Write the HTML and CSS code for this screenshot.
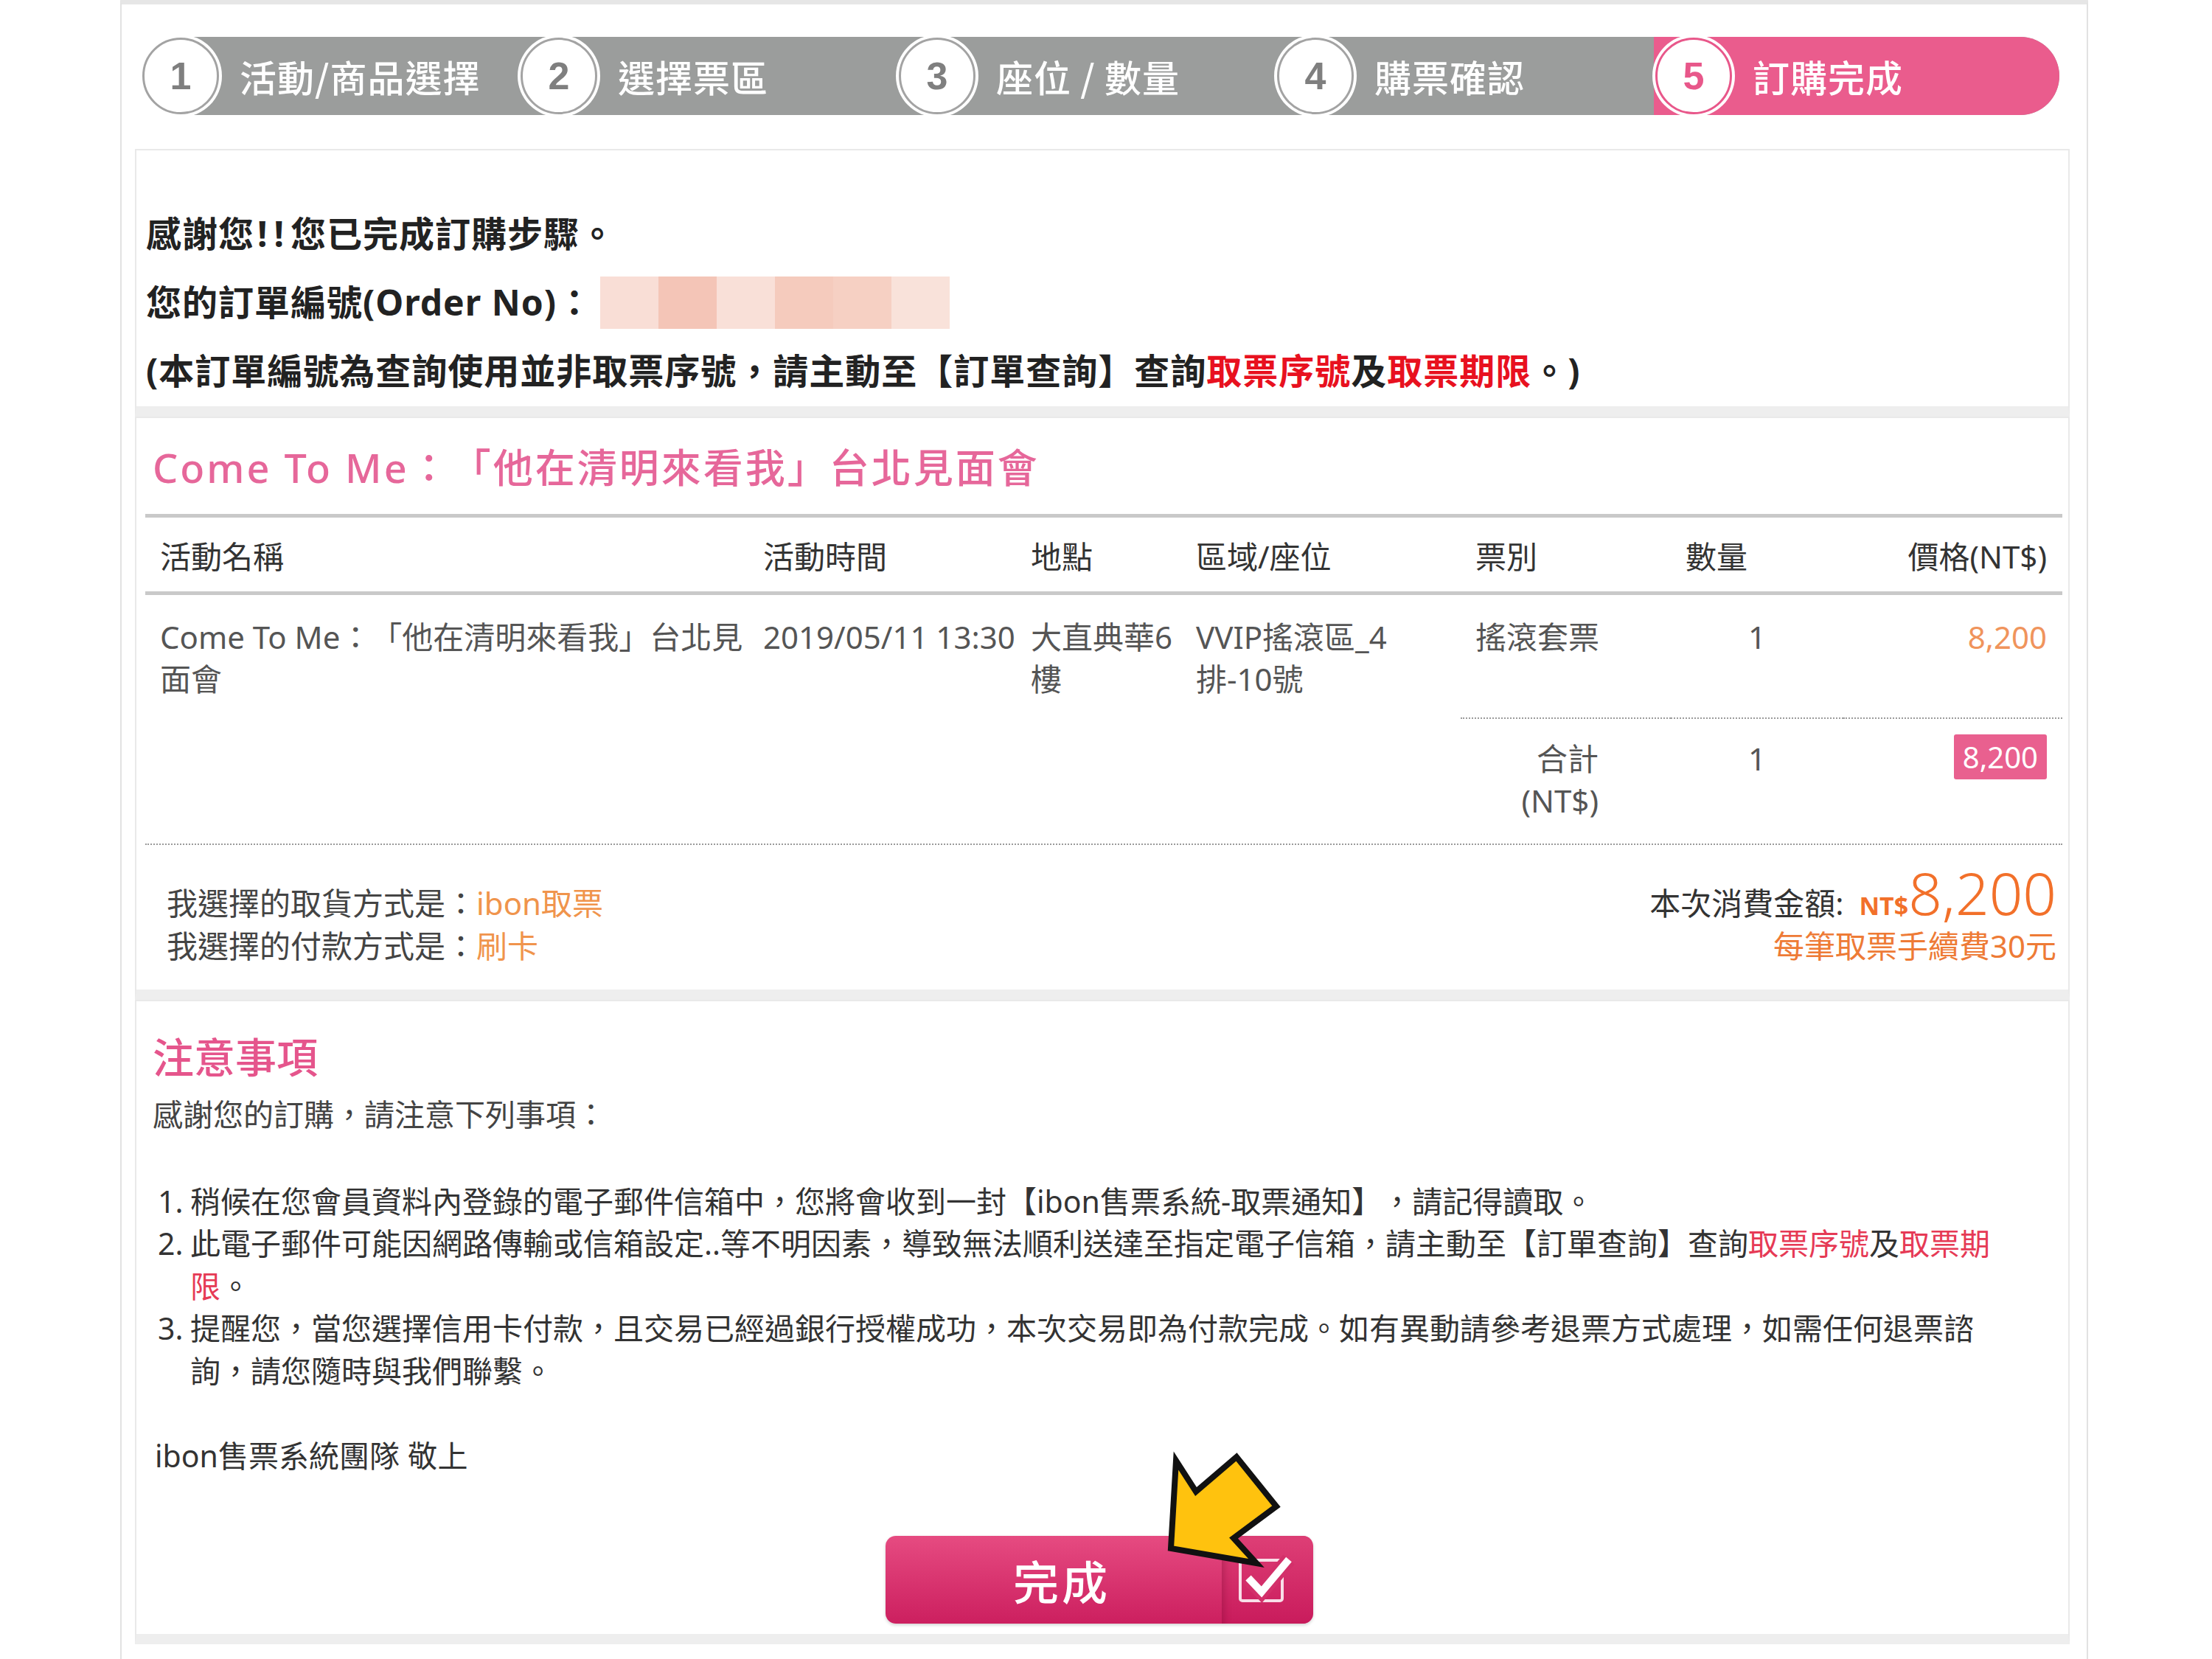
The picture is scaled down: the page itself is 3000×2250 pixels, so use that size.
FILE: index.html
```html
<!DOCTYPE html>
<html lang="zh-Hant">
<head>
<meta charset="utf-8">
<title>訂購完成</title>
<link rel="stylesheet" href="styles.css">
</head>
<body>
<div class="page">
  <div class="stepper">
    <div class="step"><span class="num">1</span><span class="label">活動/商品選擇</span></div>
    <div class="step"><span class="num">2</span><span class="label">選擇票區</span></div>
    <div class="step"><span class="num">3</span><span class="label">座位 / 數量</span></div>
    <div class="step"><span class="num">4</span><span class="label">購票確認</span></div>
    <div class="step active"><span class="num">5</span><span class="label">訂購完成</span></div>
  </div>

  <section class="panel thanks">
    <p>感謝您<span class="bang">!!</span>您已完成訂購步驟。</p>
    <p>您的訂單編號(Order No)：<span class="masked"><i class="m1"></i><i class="m2"></i><i class="m3"></i><i class="m4"></i><i class="m5"></i><i class="m6"></i></span></p>
    <p>(本訂單編號為查詢使用並非取票序號，請主動至【訂單查詢】查詢<span class="red">取票序號</span>及<span class="red">取票期限</span>。)</p>
  </section>

  <section class="panel order">
    <h2 class="event-title">Come To Me：「他在清明來看我」台北見面會</h2>
    <div class="ticket-table">
      <div class="row head">
        <div class="cell">活動名稱</div>
        <div class="cell">活動時間</div>
        <div class="cell">地點</div>
        <div class="cell">區域/座位</div>
        <div class="cell">票別</div>
        <div class="cell">數量</div>
        <div class="cell right">價格(NT$)</div>
      </div>
      <div class="row item">
        <div class="cell">Come To Me：「他在清明來看我」台北見<br>面會</div>
        <div class="cell">2019/05/11 13:30</div>
        <div class="cell">大直典華6<br>樓</div>
        <div class="cell">VVIP搖滾區_4<br>排-10號</div>
        <div class="cell">搖滾套票</div>
        <div class="cell center">1</div>
        <div class="cell right price">8,200</div>
      </div>
      <div class="row total">
        <div class="cell spacer"></div>
        <div class="cell dotted sum-label">合計<br>(NT$)</div>
        <div class="cell dotted center">1</div>
        <div class="cell dotted right"><span class="badge">8,200</span></div>
      </div>
    </div>
    <div class="summary">
      <div class="methods">
        <p>我選擇的取貨方式是：<span class="orange">ibon取票</span></p>
        <p>我選擇的付款方式是：<span class="orange">刷卡</span></p>
      </div>
      <div class="amount">
        <p class="amount-line">本次消費金額: <span class="nt">NT$</span><span class="big">8,200</span></p>
        <p class="fee">每筆取票手續費30元</p>
      </div>
    </div>
  </section>

  <section class="panel notes">
    <h3 class="notes-title">注意事項</h3>
    <p class="intro">感謝您的訂購，請注意下列事項：</p>
    <ol class="note-list">
      <li><span class="n">1.</span><span class="t">稍候在您會員資料內登錄的電子郵件信箱中，您將會收到一封【ibon售票系統-取票通知】，請記得讀取。</span></li>
      <li><span class="n">2.</span><span class="t">此電子郵件可能因網路傳輸或信箱設定..等不明因素，導致無法順利送達至指定電子信箱，請主動至【訂單查詢】查詢<span class="pinkred">取票序號</span>及<span class="pinkred">取票期<br>限</span>。</span></li>
      <li><span class="n">3.</span><span class="t">提醒您，當您選擇信用卡付款，且交易已經過銀行授權成功，本次交易即為付款完成。如有異動請參考退票方式處理，如需任何退票諮<br>詢，請您隨時與我們聯繫。</span></li>
    </ol>
    <p class="sign">ibon售票系統團隊 敬上</p>
    <div class="btn-holder">
      <button class="done-btn" type="button">
        <span class="btn-text">完成</span>
        <span class="btn-icon">
          <svg width="130" height="119" viewBox="0 0 130 119">
            <rect x="31" y="33" width="57" height="55" rx="3" fill="none" stroke="#ffffff" stroke-opacity="0.85" stroke-width="4"/>
            <path d="M42 57 L60 76 L97 32" fill="none" stroke="#d3306a" stroke-width="20" stroke-linejoin="miter"/>
            <path d="M42 57 L60 76 L97 32" fill="none" stroke="#ffffff" stroke-width="10" stroke-linejoin="miter"/>
          </svg>
        </span>
      </button>
      <svg class="pointer" width="160" height="160" viewBox="1585 1970 160 160">
        <polygon points="1594,2102 1601,1983 1628,2025 1683,1978 1737,2045 1679,2088 1710,2122" fill="#ffc20e" stroke="#111111" stroke-width="8" stroke-linejoin="miter" stroke-miterlimit="4"/>
      </svg>
    </div>
  </section>
</div>
</body>
</html>
```

FILE: styles.css
```css
* {
  box-sizing: border-box;
  margin: 0;
  padding: 0;
}

body {
  background: #ffffff;
  font-family: "Noto Sans", "Noto Sans CJK TC", sans-serif;
  color: #333333;
  text-spacing-trim: space-all;
}

.page {
  width: 2669px;
  min-height: 2250px;
  margin: 0 0 0 163px;
  border-left: 2px solid #e2e2e2;
  border-right: 2px solid #e2e2e2;
  border-top: 6px solid #e6e6e6;
  padding: 44px 23px 0 18px;
  background: #ffffff;
}

/* ---------- stepper ---------- */
.stepper {
  display: flex;
  height: 106px;
  margin: 0 14px 0 8px;
  background: #9b9d9c;
  border-radius: 53px;
}

.step {
  flex: 0 0 513px;
  display: flex;
  align-items: center;
  padding-left: 2px;
}

.step.active {
  flex: 1 1 auto;
  background: #ea5c8d;
  border-radius: 0 53px 53px 0;
}

.num {
  flex: 0 0 auto;
  width: 104px;
  height: 104px;
  border-radius: 50%;
  background: #ffffff;
  border: 3px solid #a3a3a3;
  box-shadow: 0 0 0 4px #ffffff;
  display: flex;
  align-items: center;
  justify-content: center;
  font-family: "Liberation Sans", sans-serif;
  font-weight: 700;
  font-size: 52px;
  color: #7f7f7f;
}

.step.active .num {
  border-color: #e8578a;
  color: #e8578a;
}

.label {
  margin-left: 28px;
  color: #ffffff;
  font-family: "Noto Sans CJK TC", sans-serif;
  font-size: 50px;
  font-weight: 500;
  letter-spacing: 1px;
  white-space: nowrap;
}

/* ---------- panels ---------- */
.panel {
  background: #ffffff;
  border: 2px solid #e9e9e9;
  border-bottom: 14px solid #eeeeee;
}

.thanks {
  margin-top: 46px;
  padding: 66px 13px 2px;
  font-size: 48px;
  font-weight: 700;
  line-height: 93px;
  color: #222222;
  letter-spacing: 1px;
}

.bang {
  letter-spacing: 9px;
  margin-left: 4px;
}

.red {
  color: #e8111f;
}

.masked {
  display: inline-flex;
  vertical-align: middle;
  margin-left: 10px;
  height: 71px;
  margin-top: -8px;
}

.masked i {
  display: block;
  width: 79px;
  height: 71px;
}

.m1 { background: #f9ded6; }
.m2 { background: #f4c5b7; }
.m3 { background: #f9e0d8; }
.m4 { background: #f5cbbd; }
.m5 { background: #f6d0c3; }
.m6 { background: #f9e2da; }

/* ---------- order panel ---------- */
.order {
  padding: 27px 8px 0 12px;
}

.event-title {
  padding-left: 10px;
  font-family: "Noto Sans", "Noto Sans CJK TC", sans-serif;
  font-size: 54px;
  font-weight: 500;
  line-height: 80px;
  letter-spacing: 3px;
  color: #e6679a;
}

.ticket-table {
  margin-top: 23px;
  width: 2600px;
  font-size: 42px;
  line-height: 57.5px;
}

.row {
  display: grid;
  grid-template-columns: 818px 363px 224px 379px 285px 234px 297px;
}

.row.total {
  grid-template-columns: 1784px 285px 234px 297px;
}

.cell {
  padding: 0 20px;
  white-space: nowrap;
}

.head {
  border-top: 5px solid #c9c9c9;
  border-bottom: 5px solid #c9c9c9;
  color: #333333;
}

.head .cell {
  padding-top: 24px;
  padding-bottom: 18px;
}

.item {
  color: #555555;
}

.item .cell {
  padding-top: 28px;
  padding-bottom: 23px;
}

.total {
  color: #555555;
}

.total .cell {
  padding-top: 25px;
  padding-bottom: 29px;
}

.total .dotted {
  border-top: 2px dotted #9a9a9a;
}

.sum-label {
  text-align: right;
  padding-right: 98px !important;
}

.center {
  text-align: center;
}

.right {
  text-align: right;
  padding-right: 21px;
}

.price {
  color: #f0945c;
}

.badge {
  display: inline-block;
  vertical-align: top;
  margin-top: -4px;
  padding: 0 12px;
  line-height: 61px;
  background: #e9608f;
  color: #ffffff;
  border-radius: 3px;
  font-size: 40px;
}

.summary {
  border-top: 2px dotted #9a9a9a;
  width: 2600px;
  display: flex;
  justify-content: space-between;
  padding: 50px 8px 30px 29px;
  font-size: 42px;
  line-height: 58px;
  color: #444444;
}

.orange {
  color: #f0944c;
}

.amount {
  text-align: right;
}

.amount-line {
  height: 58px;
  color: #333333;
}

.nt {
  margin-left: 10px;
  font-size: 34px;
  font-weight: 700;
  color: #f2702a;
  line-height: 0;
}

.big {
  font-size: 80px;
  font-weight: 300;
  color: #f2702a;
  line-height: 0;
}

.fee {
  color: #ee7b36;
}

/* ---------- notes ---------- */
.notes {
  padding: 33px 30px 14px 22px;
  color: #333333;
}

.notes-title {
  font-family: "Noto Sans CJK TC", sans-serif;
  font-size: 56px;
  font-weight: 500;
  line-height: 80px;
  color: #e5558c;
}

.intro {
  margin-top: 11px;
  font-size: 41px;
  line-height: 58px;
  color: #444444;
}

.note-list {
  list-style: none;
  margin-top: 61px;
  margin-left: 7px;
  font-size: 41px;
  line-height: 57.5px;
}

.note-list li {
  display: grid;
  grid-template-columns: 44px 1fr;
}

.pinkred {
  color: #e63a55;
}

.sign {
  margin-top: 57px;
  margin-left: 3px;
  font-size: 41px;
  line-height: 58px;
}

.btn-holder {
  position: relative;
  width: 580px;
  height: 119px;
  margin: 80px auto 0;
}

.done-btn {
  display: flex;
  width: 580px;
  height: 119px;
  border: none;
  border-radius: 14px;
  overflow: hidden;
  background: linear-gradient(#e64b81, #cc1f5f);
  box-shadow: 0 2px 4px rgba(0, 0, 0, 0.18);
  cursor: pointer;
}

.btn-text {
  flex: 0 0 456px;
  display: flex;
  align-items: center;
  justify-content: center;
  padding-left: 22px;
  font-family: "Noto Sans CJK TC", sans-serif;
  font-size: 62px;
  font-weight: 500;
  letter-spacing: 4px;
  color: #ffffff;
}

.btn-icon {
  flex: 1 1 auto;
  display: block;
  background: linear-gradient(#de3f76, #c91b5c);
  box-shadow: inset 10px 0 10px -6px rgba(90, 0, 30, 0.25);
}

.btn-icon svg {
  display: block;
  margin-left: -6px;
}

.pointer {
  position: absolute;
  left: 378px;
  top: -115px;
  overflow: visible;
}
```
